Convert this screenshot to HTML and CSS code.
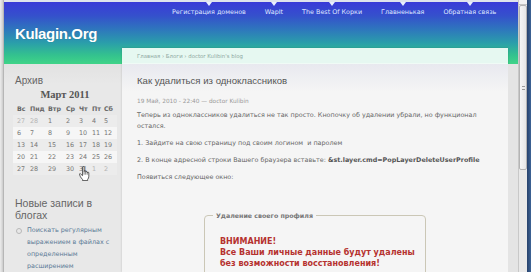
FILE: index.html
```html
<!DOCTYPE html>
<html lang="ru">
<head>
<meta charset="utf-8">
<title>Kulagin.Org</title>
<link rel="stylesheet" href="styles.css">
</head>
<body>
<div class="screen">
  <div class="frame-left"></div>
  <div class="page">
    <header class="header">
      <nav class="nav">
        <a class="nav-item">Регистрация доменов</a>
        <a class="nav-item">WapIt</a>
        <a class="nav-item">The Best Of Корки</a>
        <a class="nav-item">Главненькая</a>
        <a class="nav-item">Обратная связь</a>
      </nav>
      <div class="logo">Kulagin.Org</div>
    </header>
    <div class="columns">
      <aside class="sidebar">
        <h2 class="side-title">Архив</h2>
        <div class="calendar">
          <div class="cal-caption">Март 2011</div>
          <div class="cal-row cal-head"><span>Вс</span><span>Пнд</span><span>Втр</span><span>Ср</span><span>Чт</span><span>Пт</span><span>Сб</span></div>
          <div class="cal-row odd"><span class="other">27</span><span class="other">28</span><span>1</span><span>2</span><span>3</span><span>4</span><span>5</span></div>
          <div class="cal-row even"><span>6</span><span>7</span><span>8</span><span>9</span><span>10</span><span>11</span><span>12</span></div>
          <div class="cal-row odd"><span>13</span><span>14</span><span>15</span><span>16</span><span>17</span><span>18</span><span>19</span></div>
          <div class="cal-row even"><span>20</span><span>21</span><span>22</span><span>23</span><span>24</span><span>25</span><span>26</span></div>
          <div class="cal-row odd"><span>27</span><span>28</span><span>29</span><span>30</span><span class="cursor-cell">31<svg class="hand" viewBox="0 0 14 19" width="11" height="15"><path d="M4.5 1.3 Q4.5 0.5 5.5 0.5 Q6.5 0.5 6.5 1.3 V7 Q6.5 6.2 7.5 6.2 Q8.5 6.2 8.5 7 V7.8 Q8.5 7 9.5 7 Q10.5 7 10.5 7.8 V8.6 Q10.5 7.8 11.5 7.8 Q12.5 7.8 12.5 8.8 V13 Q12.5 15.5 11 17 V18.5 H4.5 V17 Q2.8 15.5 1.5 13 L0.7 10.8 Q0.4 9.6 1.4 9.6 Q2.1 9.6 2.8 10.8 L4.5 12.3 Z" fill="#fff" stroke="#222" stroke-width="0.9" stroke-linejoin="round"/><path d="M6.5 7 V11 M8.5 7.8 V11 M10.5 8.6 V11" stroke="#222" stroke-width="0.7" fill="none"/></svg></span><span class="other">1</span><span class="other">2</span></div>
        </div>
        <h2 class="side-title blog-title">Новые записи в блогах</h2>
        <ul class="side-list">
          <li><a>Поискать регулярным выражением в файлах с определенным расширением</a></li>
          <li><a>Включить показ all Вывод!</a></li>
        </ul>
      </aside>
      <main class="card">
        <div class="breadcrumb">Главная › Блоги › doctor Kulibin's blog</div>
        <article class="card-body">
          <h1 class="post-title">Как удалиться из одноклассников</h1>
          <div class="meta">19 Май, 2010 - 22:40 — doctor Kulibin</div>
          <p>Теперь из одноклассников удалиться не так просто. Кнопочку об удалении убрали, но функционал остался.</p>
          <p>1. Зайдите на свою страницу под своим логином&nbsp; и паролем</p>
          <p>2. В конце адресной строки Вашего браузера вставьте: <b>&amp;st.layer.cmd=PopLayerDeleteUserProfile</b></p>
          <p>Появиться следующее окно:</p>
          <fieldset class="dialog">
            <legend>Удаление своего профиля</legend>
            <div class="warning">ВНИМАНИЕ!<br>Все Ваши личные данные будут удалены<br>без возможности восстановления!</div>
          </fieldset>
        </article>
      </main>
      <div class="gutter"></div>
    </div>
  </div>
  <div class="scrollbar">
    <div class="sb-arrow"></div>
    <div class="sb-thumb"><span class="sb-grip"></span></div>
    <div class="sb-track"></div>
  </div>
  <div class="frame-right"></div>
</div>
</body>
</html>
```
FILE: styles.css
```css
* { box-sizing: border-box; margin: 0; padding: 0; }
html, body { width: 531px; height: 272px; overflow: hidden; }
body { background: #e6e6e6; font-family: "DejaVu Sans", Verdana, sans-serif; }

.screen { display: flex; height: 272px; overflow: hidden; }
.frame-left { width: 4px; flex: none; background: linear-gradient(to right, #ececec, #d4d4d4 60%, #a8a8a8); }
.frame-right { width: 4px; flex: none; background: linear-gradient(to right, #27426c, #3d6496); }

.page { width: 514px; flex: none; display: flex; flex-direction: column; border-top: 2px solid #dfe3ec; background: #e5e5e5; }

.header {
  height: 62px; flex: none;
  background: linear-gradient(#3a3bd8 0%, #3550cc 22%, #2e78bc 45%, #2a9eaa 66%, #34c28e 86%, #40d488 100%);
}
.nav { display: flex; gap: 19px; padding-left: 168px; height: 18px; }
.nav-item { display: flex; flex-direction: column; align-items: center; color: #dfe8ff; font-size: 6.4px; line-height: 9px; white-space: nowrap; }
.nav-item::before { content: ""; width: 0; height: 0; border-left: 3px solid transparent; border-right: 3px solid transparent; border-top: 4px solid #e8eeff; margin-bottom: 2px; }
.logo { margin-top: 5px; padding-left: 11px; font-family: "Liberation Sans", Arial, sans-serif; font-weight: bold; font-size: 15px; line-height: 17px; color: #fff; letter-spacing: -0.35px; text-shadow: 0 0 1px rgba(0,0,0,0.2); }

.columns { flex: 1; display: flex; align-items: stretch; min-height: 0; }
.sidebar { width: 118px; flex: none; background: linear-gradient(#e2e2e2, #e8e8e8 20px); padding: 11px 4px 0 11px; }
.gutter { width: 10px; flex: none; background: #e4e4e4; }

.side-title { font-family: "Liberation Sans", Arial, sans-serif; font-weight: normal; font-size: 10px; line-height: 12px; color: #666; }
.calendar { margin: 2px 0 0 -2px; width: 104px; position: relative; }
.cal-caption { text-align: center; font-family: "Liberation Serif", "Times New Roman", serif; font-weight: bold; font-size: 10.5px; line-height: 12px; color: #555; }
.cal-row { display: grid; grid-template-columns: 13px 18px 18px 13px 13px 12px 17px; height: 12px; align-items: center; font-size: 6.4px; color: #777; }
.cal-row span { padding-left: 4px; }
.cal-head { height: 14px; font-weight: bold; color: #666; font-size: 6.3px; }
.cal-row.odd { background: #ececec; }
.cal-row.even { background: #f6f6f6; }
.cal-row .other { color: #b4b4b4; }
.cursor-cell { position: relative; }
.hand { position: absolute; left: 4px; top: 1px; }

.blog-title { font-size: 10.5px; margin-top: 22px; width: 90px; }
.side-list { list-style: none; margin-top: 3px; }
.side-list li { display: flex; gap: 5px; font-size: 6.4px; line-height: 12px; color: #5b7b97; width: 98px; }
.side-list li::before { content: ""; flex: none; width: 4px; height: 4px; border: 1px solid #b8b8b8; border-radius: 50%; margin: 4px 0 0 1px; }

.card { width: 386px; flex: none; margin-top: -16px; background: #f5f5f5; box-shadow: 0 0 2px rgba(0,0,0,0.18); display: flex; flex-direction: column; }
.breadcrumb { height: 16px; flex: none; background: rgba(226, 248, 240, 0.78); padding-left: 15px; font-size: 5.4px; line-height: 16px; color: #8fa9a2; border-bottom: 1px solid rgba(255,255,255,0.4); }
.card-body { flex: 1; padding: 0 15px; background: linear-gradient(#e8e9ef, #f5f5f5 28px); color: #666; font-size: 6.4px; line-height: 11px; }
.post-title { font-family: "Liberation Sans", Arial, sans-serif; font-weight: normal; font-size: 9.6px; line-height: 14px; color: #555; margin-top: 10px; }
.meta { font-size: 5.8px; line-height: 10px; color: #9a9a9a; margin-top: 8px; }
.card-body p { margin-top: 4px; margin-bottom: 6px; }
.card-body p b { color: #555; }

.dialog { width: 222px; margin: 28px auto 0; border: 1px solid #cbc7b6; border-radius: 4px; padding: 16px 10px 10px 15px; }
.dialog legend { margin-left: -7px; padding: 0 3px; font-weight: bold; font-size: 6.3px; line-height: 9px; color: #777; }
.warning { font-weight: bold; font-size: 8px; line-height: 11px; color: #b5322f; }

.scrollbar { width: 9px; flex: none; display: flex; flex-direction: column; background: #ececec; border-left: 1px solid #c8c8c8; }
.sb-arrow { height: 5px; flex: none; background: #f2f2f2; border-bottom: 1px solid #c4c4c4; }
.sb-thumb { height: 165px; flex: none; background: linear-gradient(to right, #f6f6f6, #e6e6e6); border: 1px solid #b4b4b4; border-radius: 2px; display: flex; align-items: center; justify-content: center; }
.sb-grip { width: 3px; height: 4px; border-top: 1px solid #999; border-bottom: 1px solid #999; }
.sb-track { flex: 1; background: #e9e9e9; }
```
